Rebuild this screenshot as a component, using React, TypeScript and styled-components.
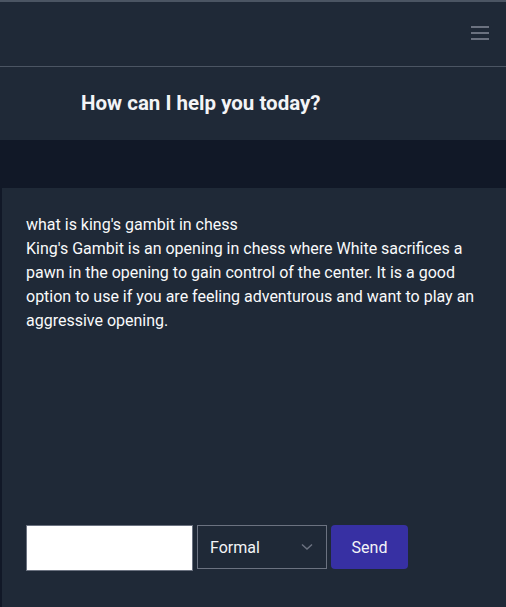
import { useState } from 'react'
import styled, { createGlobalStyle } from 'styled-components'

const GlobalStyle = createGlobalStyle`
  html, body {
    margin: 0;
    padding: 0;
    background: #111827;
    font-family: Roboto, "Noto Sans", sans-serif;
    color: #f3f4f6;
  }
  * {
    box-sizing: border-box;
  }
`

const App = () => {
  const [text, setText] = useState('')
  const [tone, setTone] = useState('Formal')

  return (
    <StyledPage>
      <GlobalStyle />
      <StyledHeader>
        <StyledMenuButton aria-label="menu">
          <svg width="18" height="14" viewBox="0 0 18 14">
            <rect x="0" y="0" width="18" height="2" fill="#6b7280" />
            <rect x="0" y="6" width="18" height="2" fill="#6b7280" />
            <rect x="0" y="12" width="18" height="2" fill="#6b7280" />
          </svg>
        </StyledMenuButton>
      </StyledHeader>
      <StyledTitleBar>
        <StyledTitle>How can I help you today?</StyledTitle>
      </StyledTitleBar>
      <StyledSpacer />
      <StyledChat>
        <StyledMessages>
          <StyledMessage>what is king's gambit in chess</StyledMessage>
          <StyledMessage>
            King's Gambit is an opening in chess where White sacrifices a pawn in the opening to gain
            control of the center. It is a good option to use if you are feeling adventurous and want
            to play an aggressive opening.
          </StyledMessage>
        </StyledMessages>
        <StyledForm onSubmit={(e) => e.preventDefault()}>
          <StyledInput value={text} onChange={(e) => setText(e.target.value)} />
          <StyledSelectWrap>
            <StyledSelect value={tone} onChange={(e) => setTone(e.target.value)}>
              <option>Formal</option>
              <option>Casual</option>
            </StyledSelect>
            <StyledChevron width="12" height="8" viewBox="0 0 12 8">
              <path d="M1 1.5 L6 6 L11 1.5" fill="none" stroke="#6b7280" strokeWidth="1.5" />
            </StyledChevron>
          </StyledSelectWrap>
          <StyledSendButton type="submit">Send</StyledSendButton>
        </StyledForm>
      </StyledChat>
    </StyledPage>
  )
}

export default App

const StyledPage = styled.div`
  display: flex;
  flex-direction: column;
  height: 607px;
  border-top: 2px solid #4b5563;
`

const StyledHeader = styled.header`
  display: flex;
  align-items: center;
  justify-content: flex-end;
  height: 65px;
  padding: 0 17px 2px 0;
  background: #1f2937;
  border-bottom: 1px solid #4b5563;
`

const StyledMenuButton = styled.button`
  display: flex;
  padding: 0;
  background: none;
  border: none;
  cursor: pointer;
`

const StyledTitleBar = styled.div`
  display: flex;
  align-items: center;
  height: 73px;
  padding: 0 0 1px 81px;
  background: #1f2937;
`

const StyledTitle = styled.h1`
  margin: 0;
  font-size: 20.5px;
  font-weight: 700;
  color: #f3f4f6;
`

const StyledSpacer = styled.div`
  height: 48px;
  background: #111827;
`

const StyledChat = styled.main`
  flex: 1;
  display: flex;
  flex-direction: column;
  margin-left: 2px;
  padding: 25px 24px 36px;
  background: #1f2937;
`

const StyledMessages = styled.div`
  flex: 1;
`

const StyledMessage = styled.p`
  margin: 0;
  font-size: 16px;
  line-height: 24px;
  color: #f9fafb;
`

const StyledForm = styled.form`
  display: flex;
  align-items: flex-start;
  gap: 4px;
`

const StyledInput = styled.input`
  width: 167px;
  height: 46px;
  border: 1px solid #6b7280;
  background: #ffffff;
  font-size: 16px;
  padding: 0 10px;
  outline: none;
`

const StyledSelectWrap = styled.div`
  position: relative;
  width: 130px;
  height: 44px;
`

const StyledSelect = styled.select`
  appearance: none;
  width: 100%;
  height: 100%;
  padding: 0 12px;
  border: 1px solid #6b7280;
  border-radius: 0;
  background: #1f2937;
  color: #f3f4f6;
  font-family: Roboto, "Noto Sans", sans-serif;
  font-size: 16px;
  outline: none;
`

const StyledChevron = styled.svg`
  position: absolute;
  right: 14px;
  top: 18px;
  pointer-events: none;
`

const StyledSendButton = styled.button`
  width: 77px;
  height: 44px;
  border: none;
  border-radius: 4px;
  background: #3730a3;
  color: #f3f4f6;
  font-family: Roboto, "Noto Sans", sans-serif;
  font-size: 16px;
  cursor: pointer;
`
